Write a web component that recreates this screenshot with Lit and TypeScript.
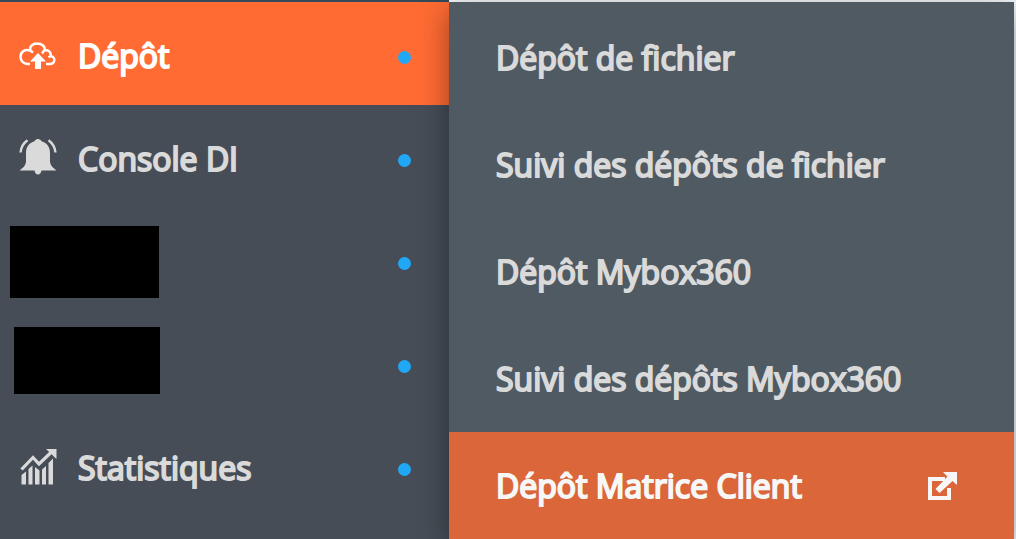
import { LitElement, html, css, svg, nothing } from "lit";
import { customElement, property } from "lit/decorators.js";
import { classMap } from "lit/directives/class-map.js";

const icons: Record<string, unknown> = {
  upload: svg`
    <path d="M11 29H8.500A7 7 0 0 1 1.500 22C1.500 16.500 6 14 11 15.500L14 17.500M11.500 16C10 11.500 13.500 8.500 18 8.500C23 8.500 26.500 11.500 25.500 15L23 18.500M25.500 15.500C29 14.500 32.500 17 31.500 21L29.500 22.500M31.500 21C35 21.500 35.800 24 35 26.500C34 29 32.500 29 27 29" fill="none" stroke="currentColor" stroke-width="2.500"/>
    <path d="M19 18L27 26.500H22V34H16V26.500H11Z"/>`,
  bell: svg`
    <path d="M19 1C21 1 22 2 22.500 3.300C28 5 31 9 31 15V24C31.500 27.500 34 30 37.500 32.500H22.500C22 35 20.800 36.500 19 36.500C17.200 36.500 16 35 15.500 32.500H.5C4 30 6.500 27.500 7 24V15C7 9 10 5 15.500 3.300C16 2 17 1 19 1Z"/>
    <path d="M8.500 2.200C4.500 5 2 9 1.500 14.500M29.500 2.200C33.500 5 36 9 36.500 14.500" fill="none" stroke="currentColor" stroke-width="2.400"/>`,
  chart: svg`
    <path d="M2.500 28L7 24.500V37.500H2.500ZM9.500 22L13.500 18.500V37.500H9.500ZM16 20L20.500 23.500V37.500H16ZM23 22.500L27 19V37.500H23ZM29.500 16L34 11.500V37.500H29.500Z"/>
    <path d="M2.500 22.500L14 10.500L20 17L32.500 5" fill="none" stroke="currentColor" stroke-width="3.200"/>
    <path d="M27 2H37.500V12Z"/>`,
  external: svg`
    <path d="M18 9H3V28H22V18" fill="none" stroke="currentColor" stroke-width="4"/>
    <path d="M16 2H30V15L25.500 11L12.500 23L8.500 19L20.500 6.500Z"/>`,
};

const menuText = css`
  a {
    display: flex;
    align-items: center;
    box-sizing: border-box;
    text-decoration: none;
    color: #dadada;
    font: 400 32px/44px "Open Sans", "Noto Sans", sans-serif;
    -webkit-text-stroke: 2px currentColor;
    white-space: nowrap;
  }
  svg {
    flex: none;
    fill: currentColor;
  }
`;

@customElement("menu-entry")
class MenuEntry extends LitElement {
  @property() label = "";
  @property() icon = "";
  @property() mask = "";
  @property({ type: Boolean }) active = false;

  static styles = [
    menuText,
    css`
      :host {
        display: block;
      }
      a {
        height: 103px;
        padding: 0 38px 0 10px;
      }
      a.active {
        background: #ff6b33;
        color: #fff;
      }
      svg {
        width: 38px;
        height: 38px;
        margin: 0 21px 0 9px;
      }
      .label {
        padding-top: 4px;
      }
      .dot {
        width: 13px;
        height: 13px;
        margin-left: auto;
        margin-top: 8px;
        border-radius: 50%;
        background: #20a8f6;
      }
      .mask {
        background: #000;
      }
      .wide {
        width: 149px;
        height: 72px;
        margin-top: 4px;
      }
      .narrow {
        width: 146px;
        height: 67px;
        margin-left: 4px;
        margin-bottom: 4px;
      }
    `,
  ];

  render() {
    return html`
      <a href="#" class=${classMap({ active: this.active })} aria-label=${this.label || "Menu"}>
        ${this.icon ? html`<svg viewBox="0 0 38 38" aria-hidden="true">${icons[this.icon]}</svg>` : nothing}
        ${this.mask
          ? html`<span class="mask ${this.mask}"></span>`
          : html`<span class="label">${this.label}</span>`}
        <span class="dot"></span>
      </a>
    `;
  }
}

@customElement("submenu-entry")
class SubmenuEntry extends LitElement {
  @property() label = "";
  @property({ type: Boolean }) active = false;

  static styles = [
    menuText,
    css`
      :host {
        display: block;
      }
      a {
        height: 107px;
        padding: 0 56px 0 47px;
        justify-content: space-between;
      }
      a.active {
        background: #db663a;
        color: #f7f7f7;
      }
      svg {
        width: 31px;
        height: 31px;
      }
    `,
  ];

  render() {
    return html`
      <a href="#" class=${classMap({ active: this.active })}>
        <span>${this.label}</span>
        ${this.active ? html`<svg viewBox="0 0 31 31" aria-hidden="true">${icons.external}</svg>` : nothing}
      </a>
    `;
  }
}

@customElement("app-root")
class AppRoot extends LitElement {
  static styles = css`
    :host {
      display: grid;
      grid-template-columns: 449fr 567fr;
      min-height: 100vh;
      overflow: hidden;
      background: #f4f8fa;
    }
    .sidebar {
      border-top: 2px solid #314b5b;
      background: #464d56;
    }
    .flyout {
      margin: 2px 2px 0 0;
      padding-top: 2px;
      background: #505a63;
      box-shadow: 0 8px 28px rgba(0, 0, 0, 0.4);
    }
  `;

  render() {
    return html`
      <nav class="sidebar" aria-label="Menu principal">
        <menu-entry label="Dépôt" icon="upload" active></menu-entry>
        <menu-entry label="Console DI" icon="bell"></menu-entry>
        <menu-entry mask="wide"></menu-entry>
        <menu-entry mask="narrow"></menu-entry>
        <menu-entry label="Statistiques" icon="chart"></menu-entry>
      </nav>
      <nav class="flyout" aria-label="Dépôt">
        <submenu-entry label="Dépôt de fichier"></submenu-entry>
        <submenu-entry label="Suivi des dépôts de fichier"></submenu-entry>
        <submenu-entry label="Dépôt Mybox360"></submenu-entry>
        <submenu-entry label="Suivi des dépôts Mybox360"></submenu-entry>
        <submenu-entry label="Dépôt Matrice Client" active></submenu-entry>
      </nav>
    `;
  }
}
